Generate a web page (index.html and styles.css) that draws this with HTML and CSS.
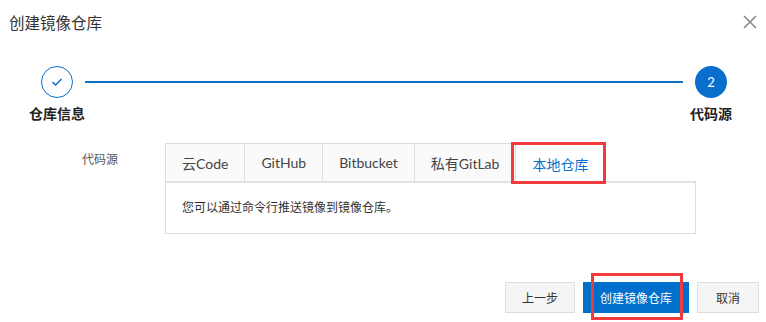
FILE: index.html
```
<!DOCTYPE html>
<html lang="zh-CN">
<head>
    <meta charset="UTF-8">
    <meta name="viewport" content="width=device-width, initial-scale=1.0">
    <title>创建镜像仓库</title>
    <link rel="stylesheet" href="styles.css">
</head>
<body>
    <div class="dialog">
        <header class="dialog-head">
            <h2>创建镜像仓库</h2>
            <button class="close" type="button" aria-label="关闭">
                <svg width="14" height="14" viewBox="0 0 14 14"><path d="M1 1L13 13M13 1L1 13" stroke="#888" stroke-width="1.6" fill="none"/></svg>
            </button>
        </header>

        <ol class="steps">
            <li class="step done">
                <span class="dot">
                    <svg width="12" height="10" viewBox="0 0 12 10"><path d="M1.5 5L4.6 8L10.5 2" stroke="#0a6fcc" stroke-width="1.5" fill="none"/></svg>
                </span>
                <span class="step-name">仓库信息</span>
            </li>
            <li class="step-line"></li>
            <li class="step current">
                <span class="dot">2</span>
                <span class="step-name">代码源</span>
            </li>
        </ol>

        <div class="field">
            <label class="field-label">代码源</label>
            <div class="source">
                <ul class="tabs">
                    <li>云Code</li>
                    <li>GitHub</li>
                    <li>Bitbucket</li>
                    <li>私有GitLab</li>
                    <li class="active">本地仓库<span class="mark mark-tab"></span></li>
                </ul>
                <div class="tab-panel">您可以通过命令行推送镜像到镜像仓库。</div>
            </div>
        </div>

        <footer class="dialog-foot">
            <button type="button" class="btn">上一步</button>
            <button type="button" class="btn btn-primary">创建镜像仓库<span class="mark mark-btn"></span></button>
            <button type="button" class="btn btn-cancel">取消</button>
        </footer>
    </div>
</body>
</html>
```

FILE: styles.css
```
body {
    margin: 0;
    background: #fff;
    color: #333;
    font-family: "Lato", "Noto Sans CJK SC", sans-serif;
}
.dialog {
    width: 766px;
    height: 322px;
    overflow: hidden;
}
.dialog-head {
    display: flex;
    justify-content: space-between;
    align-items: center;
    height: 44px;
    padding: 0 9px;
}
.dialog-head h2 {
    margin: 0;
    font-size: 15.5px;
    font-weight: normal;
    color: #333;
}
.close {
    border: none;
    background: none;
    padding: 0;
    width: 14px;
    height: 14px;
    display: flex;
    cursor: pointer;
}
.steps {
    list-style: none;
    margin: 22px 0 0;
    padding: 0 27px 0 29px;
    display: flex;
    align-items: flex-start;
}
.step {
    width: 56px;
    display: flex;
    flex-direction: column;
    align-items: center;
    gap: 6px;
}
.dot {
    width: 32px;
    height: 32px;
    box-sizing: border-box;
    border-radius: 50%;
    display: flex;
    align-items: center;
    justify-content: center;
    font-size: 13px;
}
.step.done .dot {
    border: 1px solid #0a6fcc;
    background: #fff;
}
.step.current .dot {
    background: #0a6fcc;
    color: #fff;
}
.step-name {
    font-size: 14px;
    font-weight: bold;
    line-height: 20px;
    white-space: nowrap;
    color: #222;
}
.step-line {
    flex: 1;
    height: 1.5px;
    margin-top: 15px;
    background: #0b6fc6;
}
.field {
    display: flex;
    margin-top: 19px;
}
.field-label {
    width: 83px;
    margin-left: 82px;
    padding-top: 8px;
    font-size: 12px;
    line-height: 18px;
    color: #555;
}
.source {
    width: 531px;
}
.tabs {
    list-style: none;
    margin: 0;
    padding: 0;
    display: flex;
    border-left: 1px solid #ddd;
}
.tabs li {
    position: relative;
    height: 38px;
    box-sizing: border-box;
    padding: 0 16px;
    display: flex;
    align-items: center;
    border-top: 1px solid #ddd;
    border-right: 1px solid #ddd;
    background: #fafafa;
    font-size: 14px;
    color: #444;
}
.tabs li.active {
    height: 40px;
    margin-bottom: -2px;
    border-top-color: #0a6fcc;
    background: #fff;
    color: #0a6fcc;
    z-index: 1;
}
.tab-panel {
    border: 1px solid #ddd;
    border-top: 2px solid #e2e2e2;
    padding: 16px;
    font-size: 12px;
    line-height: 18px;
    color: #333;
}
.dialog-foot {
    display: flex;
    justify-content: flex-end;
    gap: 8px;
    margin-top: 48px;
    padding-right: 7px;
}
.btn {
    position: relative;
    height: 31px;
    padding: 0 16px;
    border: 1px solid #ddd;
    background: #f5f5f5;
    color: #333;
    font-family: inherit;
    font-size: 12px;
    cursor: pointer;
}
.btn-primary {
    border-color: #0070cc;
    background: #0070cc;
    color: #fff;
}
.btn-cancel {
    min-width: 62px;
}
.mark {
    position: absolute;
    border: 3px solid #f03a3c;
    pointer-events: none;
}
.mark-tab {
    left: -5px;
    right: -2px;
    top: -2px;
    bottom: -1px;
}
.mark-btn {
    left: 7px;
    right: 5px;
    top: -10px;
    bottom: -8px;
}
```
